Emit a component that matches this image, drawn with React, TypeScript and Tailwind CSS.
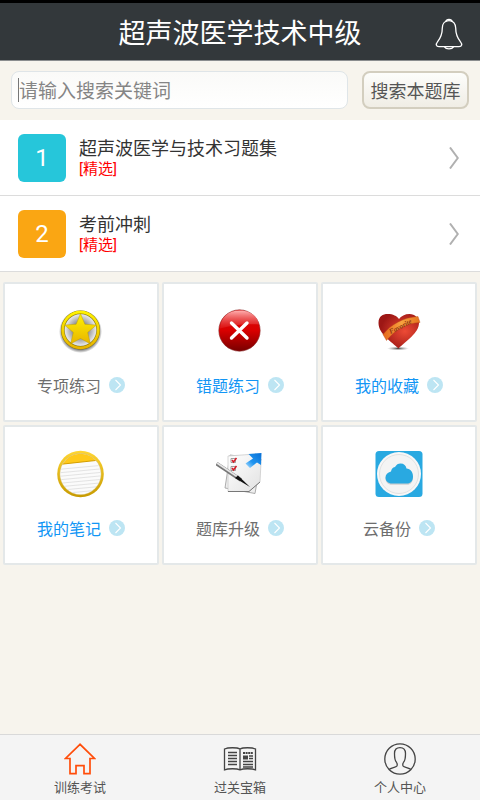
import type { ReactNode } from "react";

function BellIcon() {
  return (
    <svg viewBox="0 0 28 32" className="h-8 w-7" fill="none" stroke="#fff" strokeWidth="1.3" strokeLinejoin="round" aria-hidden="true">
      <path d="M11 3.600C11.300 .6 16.700 .6 17 3.600" />
      <path d="M14 2.600C9.500 2.600 7.300 6 7.300 10C7.300 17 5.600 20 2.500 23.800C.5 26.300 1 28.600 4 28.600H24C27 28.600 27.500 26.300 25.500 23.800C22.400 20 20.700 17 20.700 10C20.700 6 18.500 2.600 14 2.600Z" />
      <path d="M9.500 28.900C11 31.600 17 31.600 18.500 28.900" />
    </svg>
  );
}

function StarIcon() {
  return (
    <svg viewBox="0 0 48 48" className="size-12" aria-hidden="true">
      <defs>
        <linearGradient id="gold" x1="0" y1="0" x2="0" y2="1">
          <stop offset="0" stopColor="#fff200" />
          <stop offset="1" stopColor="#e8b400" />
        </linearGradient>
        <radialGradient id="silver">
          <stop offset="0.3" stopColor="#777" />
          <stop offset="0.85" stopColor="#e4e4e4" />
          <stop offset="1" stopColor="#8a8a8a" />
        </radialGradient>
        <radialGradient id="starShade">
          <stop offset="0.8" stopColor="#333" stopOpacity="0.8" />
          <stop offset="1" stopColor="#333" stopOpacity="0" />
        </radialGradient>
      </defs>
      <circle cx="23.500" cy="24.500" r="21.500" fill="url(#starShade)" />
      <circle cx="23.500" cy="23" r="17.800" fill="url(#silver)" stroke="#8a7800" strokeWidth="3.500" />
      <circle cx="23.500" cy="23" r="17.800" fill="none" stroke="url(#gold)" strokeWidth="2.700" />
      <path d="M23.500 6.500L27.900 17.300L39.500 18L30.700 25.500L33.500 37L23.500 31.500L13.500 37L16.300 25.500L7.500 18L19.100 17.300Z" fill="url(#gold)" stroke="#b09600" strokeWidth=".4" />
    </svg>
  );
}

function WrongIcon() {
  return (
    <svg viewBox="0 0 48 48" className="size-12" aria-hidden="true">
      <defs>
        <linearGradient id="redBall" x1="0" y1="0" x2="0" y2="1">
          <stop offset="0" stopColor="#d80d0d" />
          <stop offset="0.5" stopColor="#d90000" />
          <stop offset="1" stopColor="#780000" />
        </linearGradient>
        <linearGradient id="redGloss" x1="0" y1="0" x2="0" y2="1">
          <stop offset="0" stopColor="#ffb0b0" />
          <stop offset="1" stopColor="#e02020" stopOpacity=".5" />
        </linearGradient>
      </defs>
      <circle cx="23.500" cy="23.500" r="20.700" fill="url(#redBall)" stroke="#8d3030" strokeWidth=".6" />
      <path d="M4 21.500C4.500 10.500 12.500 3.500 23.500 3.500S42 9.500 42.900 17.500C31.500 16.500 16.500 17.500 4 21.500Z" fill="url(#redGloss)" />
      <path d="M15.500 16L31 31M31 16L15.500 31" stroke="#fff" strokeWidth="3.400" strokeLinecap="round" />
    </svg>
  );
}

function HeartIcon() {
  return (
    <svg viewBox="0 0 48 48" className="size-12" aria-hidden="true">
      <defs>
        <radialGradient id="heart" cx=".65" cy=".5" r=".6">
          <stop offset="0" stopColor="#ed4b35" />
          <stop offset="1" stopColor="#9d1715" />
        </radialGradient>
        <linearGradient id="ribbon">
          <stop offset="0" stopColor="#e5661a" />
          <stop offset=".5" stopColor="#f7a340" />
          <stop offset="1" stopColor="#e5731d" />
        </linearGradient>
        <radialGradient id="heartShade">
          <stop offset="0" stopColor="#444" />
          <stop offset="1" stopColor="#999" stopOpacity="0" />
        </radialGradient>
      </defs>
      <ellipse cx="23" cy="41.500" rx="11" ry="2" fill="url(#heartShade)" />
      <path d="M23.500 41.500C17 35 3.500 27 3.500 16C3.500 9 8 7 12.500 7C18 7 22 9 24 12C26 9 30 7 34.500 7C40 7 44 11 44 16C44 26 31 34 23.500 41.500Z" fill="url(#heart)" />
      <path d="M8 27.500C16 17.500 28 10.500 43 9.500L45 15.500C31 16 20 23 11.500 33.500Z" fill="url(#ribbon)" stroke="#bd4a12" strokeWidth=".4" />
      <text x="15.500" y="27" transform="rotate(-27 15.500 27)" fontFamily="Liberation Serif, serif" fontStyle="italic" fontWeight="bold" fontSize="7" fill="#8c3512">Favorite</text>
    </svg>
  );
}

function NoteIcon() {
  return (
    <svg viewBox="0 0 48 48" className="size-12" aria-hidden="true">
      <defs>
        <linearGradient id="noteRing" x1="0" y1="0" x2="0" y2="1">
          <stop offset="0" stopColor="#ffd633" />
          <stop offset="1" stopColor="#c79a00" />
        </linearGradient>
        <clipPath id="noteClip"><circle cx="23.500" cy="24" r="20.200" /></clipPath>
      </defs>
      <circle cx="23.500" cy="24" r="23.300" fill="url(#noteRing)" />
      <circle cx="23.500" cy="24" r="20.500" fill="#f4f0df" stroke="#d8c070" strokeWidth=".8" />
      <g clipPath="url(#noteClip)">
        <path d="M0 0H48V9.500L0 15Z" fill="#ffc91a" />
        <path d="M0 14.700L48 9.500V48H0Z" fill="#fbfbfb" />
        <path d="M0 14.700L48 9.500" stroke="#d49f00" />
        <path d="M0 19.500L48 15M0 23L48 18.500M0 26.500L48 22M0 30L48 25.500M0 33.500L48 29M0 37L48 32.500M0 40.500L48 36M0 44L48 39.500M0 47.500L48 43" stroke="#ddd" strokeWidth=".8" />
      </g>
    </svg>
  );
}

function UpgradeIcon() {
  return (
    <svg viewBox="0 0 48 48" className="size-12" aria-hidden="true">
      <defs>
        <linearGradient id="paper" x1="0" y1="0" x2="1" y2="1">
          <stop offset="0" stopColor="#fff" />
          <stop offset="1" stopColor="#e2e2e2" />
        </linearGradient>
        <linearGradient id="arrowBlue" x1="1" y1="0" x2="0" y2="1">
          <stop offset="0" stopColor="#086fd5" />
          <stop offset="0.6" stopColor="#2095f0" />
          <stop offset="1" stopColor="#b6e2ff" />
        </linearGradient>
      </defs>
      <path d="M14 5L45 9L39 43.500L9 38Z" fill="#eee" stroke="#999" strokeWidth=".8" />
      <path d="M12 6L40 4L45 12L44 32L33 41.500H12Z" fill="url(#paper)" stroke="#ccc" strokeWidth=".8" />
      <path d="M12 41.500H33L44 32" fill="none" stroke="#777" />
      <g fill="none">
        <path d="M15 8.500H19.500V12.500H15ZM15 16.500H19.500V20.500H15Z" stroke="#888" strokeWidth=".8" />
        <path d="M16 10L17.500 12L20.500 8M16 18L17.500 20L20.500 16" stroke="#d51925" strokeWidth="1.500" />
      </g>
      <path d="M.5 13.500L25 30" stroke="#777" strokeWidth="3.800" />
      <path d="M1 13L24 28.500" stroke="#e6e6e6" strokeWidth="1.800" />
      <path d="M19 28L22 25.500L34 37Z" fill="#111" />
      <path d="M45.500 3L45 15L41 12.500L34 18L29.500 13.500L37 8.500L32.500 4Z" fill="url(#arrowBlue)" />
    </svg>
  );
}

function CloudIcon() {
  return (
    <svg viewBox="0 0 48 48" className="size-12" aria-hidden="true">
      <rect x=".5" y="1" width="47" height="46" rx="3.500" fill="#29a9e1" />
      <circle cx="24" cy="24" r="22" fill="#f7f7f7" />
      <circle cx="24" cy="24" r="19.500" fill="#f4f4f4" stroke="#e2e2e2" />
      <path d="M17 34.800C13 34.800 10.500 32 10.500 28.500C10.500 25.500 12.500 23.500 16 22.500L31.500 19.500C35.500 20 38 23 38 27.500C38 32 35.500 34.800 32 34.800Z" fill="#cfcfcf" />
      <path d="M17 33.500C13 33.500 10.500 31 10.500 27.500C10.500 24.500 12.500 22.500 16 21.500C16.500 19 17.500 17.500 20 17C21.500 14.500 23 13.500 25.500 13.500C29 13.500 31 15.500 31.500 18.500C35.500 19 38 22 38 26.500C38 31 35.500 33.500 32 33.500Z" fill="#29a9e1" />
    </svg>
  );
}

function HomeIcon() {
  return (
    <svg viewBox="0 0 32 32" className="size-8" fill="none" stroke="#ff4d0a" strokeWidth="1.700" aria-hidden="true">
      <path d="M16 1.300L1.500 15.500H6V30.700H12V22.700H20V30.700H26V15.500H30.500Z" />
    </svg>
  );
}

function BookIcon() {
  return (
    <svg viewBox="0 0 34 32" className="h-8 w-9" fill="none" stroke="#444" strokeWidth="1.300" aria-hidden="true">
      <path d="M17 6C14 4.300 5 4.300 1.500 6V26.800C5 25.400 14 25.400 17 26.800C20 25.400 29 25.400 32.500 26.800V6C29 4.300 20 4.300 17 6ZM17 6V27" />
      <path d="M5 9.500H14M5 12.500H14M5 15.500H14M5 18.500H14M5 21.500H14M20 18.500H30M20 21.500H30M20 24H30M26 13H30M26 15.500H30" />
      <path d="M20 10H30" strokeWidth="2.200" strokeDasharray="2 .6" />
      <path d="M20 14.500H25" strokeWidth="4" />
    </svg>
  );
}

function PersonIcon() {
  return (
    <svg viewBox="0 0 32 32" className="size-8" fill="none" stroke="#444" strokeWidth="1.300" aria-hidden="true">
      <circle cx="16" cy="16" r="15.200" />
      <path d="M5 26.500C7 24.500 12 24.500 13 22.800C13.500 21.500 13 20 12.300 19C10.500 17 10.500 14 10.500 10.500C10.500 6.500 12.500 4.600 16 4.600S21.500 6.500 21.500 10.500C21.500 14 21.500 17 19.700 19C19 20 18.500 21.500 19 22.800C20 24.500 25 24.500 27 26.500" />
    </svg>
  );
}

const banks = [
  { title: "超声波医学与技术习题集", color: "bg-[#26c6da]" },
  { title: "考前冲刺", color: "bg-[#faa613]" },
];

const tiles: { label: string; active: boolean; icon: ReactNode }[] = [
  { label: "专项练习", active: false, icon: <StarIcon /> },
  { label: "错题练习", active: true, icon: <WrongIcon /> },
  { label: "我的收藏", active: true, icon: <HeartIcon /> },
  { label: "我的笔记", active: true, icon: <NoteIcon /> },
  { label: "题库升级", active: false, icon: <UpgradeIcon /> },
  { label: "云备份", active: false, icon: <CloudIcon /> },
];

const tabs = [
  { label: "训练考试", icon: <HomeIcon /> },
  { label: "过关宝箱", icon: <BookIcon /> },
  { label: "个人中心", icon: <PersonIcon /> },
];

export default function App() {
  return (
    <div className="flex min-h-screen flex-col bg-[#f7f4ed] font-['Roboto','Noto_Sans_CJK_SC',sans-serif]">
      <header className="grid h-[61px] grid-cols-[48px_1fr_48px] items-center border-t-3 border-b border-t-black border-b-[#8b8d8e] bg-[#33383b] pt-1">
        <h1 className="col-start-2 text-center text-[27px] leading-8 text-white">超声波医学技术中级</h1>
        <button type="button" aria-label="通知" className="flex justify-center pr-3.5">
          <BellIcon />
        </button>
      </header>

      <form className="flex gap-3.5 px-[11px] pt-2.5 pb-[11px]" onSubmit={(e) => e.preventDefault()}>
        <div className="flex h-[38px] min-w-0 flex-1 items-center rounded-lg border border-[#dfe5e8] bg-linear-to-b from-[#fafaf8] to-white px-1.5">
          <span className="h-6 w-px bg-[#777]" />
          <input
            type="text"
            aria-label="搜索"
            placeholder="请输入搜索关键词"
            className="min-w-0 flex-1 bg-transparent pt-1 text-[19px] leading-6 outline-none placeholder:text-[#858585]"
          />
        </div>
        <button type="submit" className="h-[38px] w-[107px] rounded-lg border-2 border-[#d3cebf] bg-linear-to-b from-[#fdfdfb] to-[#f0ede5] pt-1 text-lg leading-6 whitespace-nowrap text-[#555]">
          搜索本题库
        </button>
      </form>

      <ul className="bg-white">
        {banks.map((bank, i) => (
          <li key={bank.title} className="border-b border-[#dcdcdc]">
            <button type="button" className="flex h-[75px] w-full items-center pr-[21px] pl-[18px] text-left">
              <span className={`flex size-12 items-center justify-center rounded-md text-2xl text-white ${bank.color}`}>{i + 1}</span>
              <span className="ml-[13px] flex flex-1 flex-col pt-0.5">
                <span className="text-lg leading-5 text-[#333]">{bank.title}</span>
                <span className="text-[15px] leading-5 text-[#ff0000]">[精选]</span>
              </span>
              <svg viewBox="0 0 10 22" className="h-[22px] w-2.5" fill="none" stroke="#b0b0b0" strokeWidth="2" aria-hidden="true">
                <path d="M1 .5L8.800 11L1 21.500" />
              </svg>
            </button>
          </li>
        ))}
      </ul>

      <main className="grid grid-cols-3 gap-[3px] px-[3px] py-2.5">
        {tiles.map((tile) => (
          <button key={tile.label} type="button" className="flex h-[140px] flex-col items-center rounded-xs border-2 border-[#e4e8e9] bg-white pt-[23px]">
            {tile.icon}
            <span className={`mt-5 flex items-start gap-2 text-base leading-6 ${tile.active ? "text-[#1296f5]" : "text-[#6e6e6e]"}`}>
              {tile.label}
              <svg viewBox="0 0 16 16" className="mt-0.5 size-4" aria-hidden="true">
                <circle cx="8" cy="8" r="8" fill="#bde5f3" />
                <path d="M6.500 3L11.500 8L6.500 13" fill="none" stroke="#fff" strokeWidth="1.100" />
              </svg>
            </span>
          </button>
        ))}
      </main>

      <nav className="mt-auto grid h-[66px] grid-cols-3 border-t border-[#d9d9d9] bg-[#f4f4f4]">
        {tabs.map((tab) => (
          <button key={tab.label} type="button" className="flex flex-col items-center pt-2 text-[13px] leading-5 text-[#555]">
            {tab.icon}
            <span className="mt-[3px]">{tab.label}</span>
          </button>
        ))}
      </nav>
    </div>
  );
}
